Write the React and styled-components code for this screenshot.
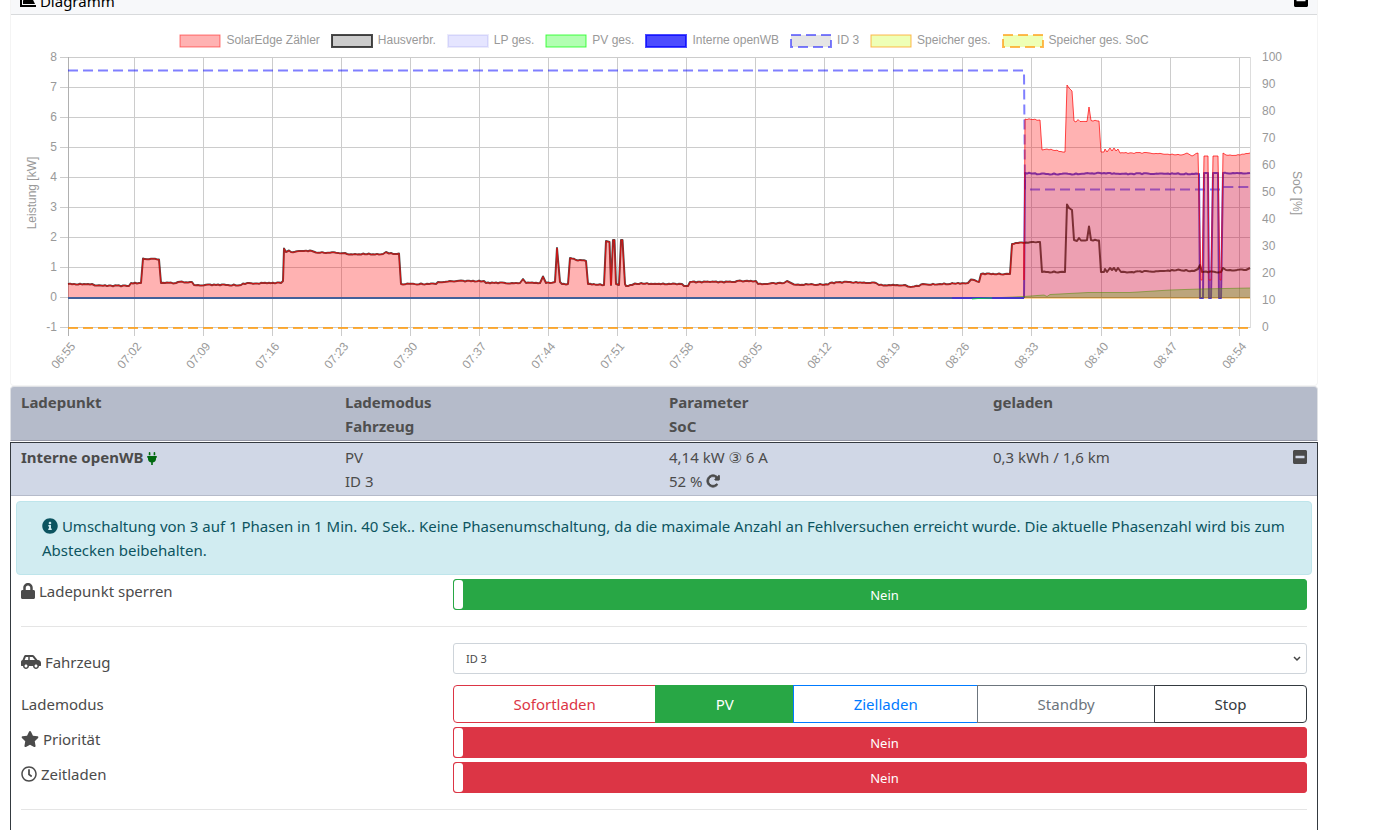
import React, { useState } from 'react'
import styled, { createGlobalStyle } from 'styled-components'
import {
  FaCarSide,
  FaChartArea,
  FaInfoCircle,
  FaLock,
  FaMinusSquare,
  FaPlug,
  FaRegClock,
  FaStar,
} from 'react-icons/fa'
import { FaRotateRight } from 'react-icons/fa6'

const legend = [
  { label: 'SolarEdge Zähler', fill: 'rgba(255,0,0,0.3)', stroke: 'rgba(255,0,0,0.5)', width: 1 },
  { label: 'Hausverbr.', fill: 'rgba(0,0,0,0.2)', stroke: 'rgba(0,0,0,0.7)', width: 2 },
  { label: 'LP ges.', fill: 'rgba(0,0,255,0.1)', stroke: 'rgba(0,0,200,0.08)', width: 2 },
  { label: 'PV ges.', fill: 'rgba(0,255,0,0.3)', stroke: 'rgba(0,255,0,0.7)', width: 1 },
  { label: 'Interne openWB', fill: 'rgba(0,0,255,0.7)', stroke: 'rgba(0,0,255,0.7)', width: 2 },
  { label: 'ID 3', fill: 'rgba(0,0,0,0.1)', stroke: 'rgba(0,0,255,0.5)', width: 2, dash: '10 5' },
  { label: 'Speicher ges.', fill: 'rgba(200,255,13,0.3)', stroke: 'rgba(255,155,13,0.7)', width: 1 },
  { label: 'Speicher ges. SoC', fill: 'rgba(200,255,13,0.3)', stroke: 'rgba(255,155,13,0.7)', width: 2, dash: '10 5' },
]

const times = [
  [68, '06:55'], [134, '07:02'], [203, '07:09'], [272, '07:16'], [341, '07:23'], [410, '07:30'],
  [479, '07:37'], [548, '07:44'], [617, '07:51'], [686, '07:58'], [755, '08:05'], [824, '08:12'],
  [893, '08:19'], [962, '08:26'], [1031, '08:33'], [1101, '08:40'], [1170, '08:47'], [1239, '08:54'],
]
const power = [8, 7, 6, 5, 4, 3, 2, 1, 0, -1]
const soc = [100, 90, 80, 70, 60, 50, 40, 30, 20, 10, 0]

const houseMorning = [
  [68, 284], [92, 284], [95, 285.5], [129, 286], [131, 283], [141, 283], [143, 258.5], [159, 259.5],
  [161, 283], [176, 283], [178, 282], [192, 282], [194, 285], [241, 285], [243, 283.5], [281, 283],
  [283, 281], [284, 248.5], [286, 252], [289, 250.5], [291, 252], [304, 251], [312, 251], [316, 252.5],
  [345, 253], [347, 254], [383, 254], [386, 252], [389, 253.5], [399, 253.5], [401, 284], [436, 284],
  [438, 282], [457, 281], [484, 281], [486, 283], [520, 283], [523, 279], [526, 283], [540, 283],
  [543, 276.5], [546, 283], [555, 282], [557, 248], [560, 282], [562, 284], [568, 284], [570, 258],
  [576, 260], [586, 261], [588, 284], [604, 285], [606, 241], [609.5, 242], [611, 285], [613, 240],
  [614.5, 240], [616, 284], [619, 285], [621, 240], [622.5, 240], [625, 284], [626, 286], [632, 285],
  [635, 283.5], [682, 284], [684, 286], [688, 286], [690, 282], [735, 282], [737, 281], [756, 281],
  [758, 284], [784, 283], [787, 281], [790, 282.5], [794, 284.5], [828, 284.5], [830, 283], [850, 282],
  [876, 283], [879, 285], [905, 285], [908, 286.5], [919, 286], [921, 284.5], [940, 284], [968, 283],
  [971, 279.5], [979, 282], [981, 274], [1010, 274], [1012, 244], [1018, 243], [1024, 243],
]
const houseCharging = [
  [1032, 242], [1040, 242], [1042, 272], [1065, 272], [1067, 204.5], [1069, 208], [1072, 210],
  [1074, 240], [1077, 241], [1079, 238], [1081, 240.5], [1087, 240], [1089, 226.5], [1091, 240],
  [1099, 240.5], [1101, 272], [1104, 272], [1105, 269], [1107, 272], [1110, 268], [1112, 270],
  [1114, 268], [1116, 271], [1118, 268], [1121, 272], [1132, 272], [1160, 271], [1180, 270], [1194, 271],
  [1198, 269], [1200, 265], [1202, 272], [1221, 272], [1223, 268], [1226, 270], [1246, 270], [1250, 268],
]
const meterCharging = [
  [1024, 280], [1025, 119], [1040, 120], [1042, 150], [1047, 149], [1065, 152], [1067, 85], [1069, 88],
  [1072, 91], [1074, 121], [1076, 122], [1078, 119.5], [1080, 121.5], [1087, 121.5], [1089, 107],
  [1091, 120.5], [1099, 121], [1101, 152], [1104, 152], [1105, 149], [1107, 152], [1110, 148],
  [1112, 151], [1114, 148], [1116, 151], [1118, 149], [1120, 153], [1150, 153], [1180, 155],
  [1187, 153], [1192, 156], [1198, 153], [1201, 280], [1202, 280], [1204, 156], [1208, 156],
  [1209, 280], [1211, 280], [1213, 156], [1218, 156], [1220, 280], [1221, 280], [1223, 153],
  [1226, 155], [1240, 155], [1250, 153],
]
const wallbox = [
  [68, 298], [1024, 298], [1025, 173], [1040, 174], [1070, 174], [1080, 174], [1100, 173], [1120, 174],
  [1160, 173.5], [1199, 174], [1200, 298], [1203, 298], [1204, 173], [1208, 173], [1209, 298],
  [1211, 298], [1213, 173], [1218, 173], [1219, 298], [1221, 298], [1223, 173], [1250, 173],
]
const solar = [
  [68, 298], [972, 298], [974, 298.5], [990, 298], [1024, 296.5], [1044, 295], [1047, 296.5],
  [1050, 294.5], [1088, 292.5], [1130, 292.5], [1170, 290], [1200, 289], [1250, 288],
]
const carSoc = [[68, 70.5], [1024, 70.5], [1025, 189.5], [1222, 189.5], [1223, 187], [1250, 187]]

// meter readings wobble a little on the flat stretches
const wobble = (points) => {
  const out = []
  points.forEach(([x, y], i) => {
    out.push([x, y])
    const next = points[i + 1]
    if (!next || next[0] - x < 6) return
    for (let px = x + 2; px < next[0] - 1; px += 2) {
      const base = y + ((next[1] - y) * (px - x)) / (next[0] - x)
      out.push([px, base + Math.sin(px * px) * 0.5])
    }
  })
  return out
}
const toPoints = (points) => points.map((p) => p.join(',')).join(' ')
const toArea = (points) => `68,298 ${toPoints(points)} 1250,298`

const house = wobble([...houseMorning, ...houseCharging])
const meter = wobble([...houseMorning, ...meterCharging])

const modes = [
  { label: 'Sofortladen', color: '#dc3545' },
  { label: 'PV', color: '#28a745' },
  { label: 'Zielladen', color: '#007bff' },
  { label: 'Standby', color: '#6c757d' },
  { label: 'Stop', color: '#343a40' },
]

const Chart = () => (
  <Plot viewBox='11 48 1306 337' role='img' aria-label='Leistung und SoC'>
    <g stroke='#ccc'>
      {power.map((v) => (
        <line key={v} x1='60' x2='1250' y1={297.5 - v * 30} y2={297.5 - v * 30} />
      ))}
      {times.map(([x]) => (
        <line key={x} x1={x + 0.5} x2={x + 0.5} y1='57' y2='336' />
      ))}
      <line x1='68.5' x2='68.5' y1='57' y2='336' stroke='#b0b0b0' />
      <line x1='1250.5' x2='1250.5' y1='57' y2='328' stroke='#ddd' />
    </g>
    <g fill='none' strokeLinejoin='round'>
      <polyline points='68,328 1250,328' stroke='rgba(255,155,13,0.8)' strokeWidth='2' strokeDasharray='10 5' />
      <polyline points='68,298 1250,298' stroke='rgba(255,155,13,0.4)' strokeWidth='2' />
      <polygon points={toArea(wallbox)} fill='rgba(0,0,255,0.1)' />
      <polyline points={toPoints(carSoc)} stroke='rgba(0,0,255,0.5)' strokeWidth='2' strokeDasharray='10 5' />
      <polyline points={toPoints(wobble(wallbox.slice(1)))} stroke='rgba(40,20,210,0.8)' strokeWidth='2' />
      <polygon points={toArea(solar)} fill='rgba(0,255,0,0.3)' />
      <polyline points={toPoints(solar)} stroke='rgba(0,200,0,0.5)' />
      <polyline points={toPoints(house)} stroke='rgba(0,0,0,0.7)' strokeWidth='2' />
      <polygon points={toArea(meter)} fill='rgba(255,0,0,0.3)' />
      <polyline points={toPoints(meter)} stroke='rgba(255,0,0,0.7)' />
      <polyline points='68,298 952,298' stroke='#44609a' strokeWidth='2' />
      <polyline points='952,298 1024,298' stroke='#4636c8' strokeWidth='2' />
      <polyline points='972,299 978,298.5 992,298' stroke='rgba(0,230,60,0.8)' />
    </g>
    <g fill='#999' fontSize='12'>
      {power.map((v) => (
        <text key={v} x='57' y={301 - v * 30} textAnchor='end'>{v}</text>
      ))}
      {soc.map((v) => (
        <text key={v} x='1262' y={331 - v * 2.7}>{v}</text>
      ))}
      {times.map(([x, label]) => (
        <text key={label} transform={`translate(${x + 5} 344) rotate(-50)`} y='4' textAnchor='end'>
          {label}
        </text>
      ))}
      <text transform='translate(36 193) rotate(-90)' textAnchor='middle'>Leistung [kW]</text>
      <text transform='translate(1293 193) rotate(90)' textAnchor='middle'>SoC [%]</text>
    </g>
  </Plot>
)

const Toggle = ({ id, color }) => {
  const [on, setOn] = useState(false)
  return (
    <Switch $color={color}>
      <input id={id} type='checkbox' role='switch' checked={on} onChange={() => setOn(!on)} />
      <i />
      <span>{on ? 'Ja' : 'Nein'}</span>
    </Switch>
  )
}

const App = () => {
  const [mode, setMode] = useState('PV')
  return (
    <>
      <GlobalStyle />
      <Page>
        <Diagram>
          <DiagramHead>
            <span><Icon as={FaChartArea} /> Diagramm</span>
            <Icon as={FaMinusSquare} $width={14} />
          </DiagramHead>
          <Legend>
            {legend.map((item) => (
              <li key={item.label}>
                <svg width='42' height='14'>
                  <rect
                    x='1' y='1' width='40' height='12'
                    fill={item.fill}
                    stroke={item.stroke}
                    strokeWidth={item.width}
                    strokeDasharray={item.dash}
                  />
                </svg>
                {item.label}
              </li>
            ))}
          </Legend>
          <Chart />
        </Diagram>

        <ListHead>
          <Cell>Ladepunkt</Cell>
          <Cell>Lademodus<br />Fahrzeug</Cell>
          <Cell>Parameter<br />SoC</Cell>
          <Cell>geladen</Cell>
        </ListHead>

        <ChargePoint>
          <Summary>
            <Cell><b>Interne openWB</b> <PlugIcon as={FaPlug} $width={10} /></Cell>
            <Cell>PV<br />ID 3</Cell>
            <Cell>
              4,14 kW ③ 6 A<br />
              52 %{' '}
              <IconButton aria-label='SoC aktualisieren'>
                <ReloadIcon as={FaRotateRight} $width={14} />
              </IconButton>
            </Cell>
            <Cell>
              <Spread>
                0,3 kWh / 1,6 km
                <IconButton aria-label='Zuklappen'><Icon as={FaMinusSquare} $width={14} /></IconButton>
              </Spread>
            </Cell>
          </Summary>

          <Alert>
            <Icon as={FaInfoCircle} /> Umschaltung von 3 auf 1 Phasen in 1 Min. 40 Sek.. Keine Phasenumschaltung,
            da die maximale Anzahl an Fehlversuchen erreicht wurde. Die aktuelle Phasenzahl wird bis zum Abstecken
            beibehalten.
          </Alert>

          <Settings>
            <Row>
              <Label htmlFor='lock'><Icon as={FaLock} $width={14} /> Ladepunkt sperren</Label>
              <Toggle id='lock' color='#28a745' />
            </Row>
            <Rule />
            <Row $gap={11}>
              <Label htmlFor='vehicle' $tall><Icon as={FaCarSide} $width={20} /> Fahrzeug</Label>
              <SelectBox>
                <select id='vehicle' defaultValue='ID 3'>
                  <option>ID 3</option>
                </select>
                <svg width='8' height='6' viewBox='0 0 8 6' fill='none' stroke='#444' strokeWidth='1.5'>
                  <path d='M1 1l3 3 3-3' />
                </svg>
              </SelectBox>
            </Row>
            <Row $gap={4}>
              <Label as='span' id='mode' $tall>Lademodus</Label>
              <Modes role='group' aria-labelledby='mode'>
                {modes.map((m) => (
                  <ModeButton
                    key={m.label}
                    $color={m.color}
                    $active={m.label === mode}
                    onClick={() => setMode(m.label)}
                  >
                    {m.label}
                  </ModeButton>
                ))}
              </Modes>
            </Row>
            <Row $gap={4}>
              <Label htmlFor='priority'><Icon as={FaStar} $width={18} /> Priorität</Label>
              <Toggle id='priority' color='#dc3545' />
            </Row>
            <Row>
              <Label htmlFor='timed'><Icon as={FaRegClock} /> Zeitladen</Label>
              <Toggle id='timed' color='#dc3545' />
            </Row>
            <Rule />
          </Settings>
        </ChargePoint>
      </Page>
    </>
  )
}

const GlobalStyle = createGlobalStyle`
  * {
    box-sizing: border-box;
  }
  body {
    margin: 0;
    background-color: #fff;
    color: #4b4b4b;
    font-family: 'Segoe UI', 'Noto Sans', 'DejaVu Sans', sans-serif;
    font-size: 15px;
    line-height: 24px;
  }
  html, body, #root {
    height: 100%;
  }
  button, select, input {
    font-family: inherit;
    color: inherit;
    margin: 0;
  }
`
const Icon = styled.svg`
  width: ${({ $width }) => $width || 16}px;
  height: 16px;
  vertical-align: -2px;
`
const PlugIcon = styled(Icon)`
  height: 13px;
  color: #00690f;
`
const ReloadIcon = styled(Icon)`
  stroke-width: 30px;
`
const Page = styled.main`
  display: flex;
  flex-direction: column;
  height: 100%;
  overflow: hidden;
  padding: 0 80px 0 10px;
`
const Diagram = styled.section`
  flex: none;
  border: 1px solid #f4f4f4;
  border-top: 0;
  border-radius: 0 0 4px 4px;
`
const DiagramHead = styled.header`
  display: flex;
  justify-content: space-between;
  align-items: flex-end;
  height: 15px;
  overflow: hidden;
  padding: 0 9px 1px;
  background-color: #f7f8fa;
  border-bottom: 1px solid #d8dadc;
  color: #000;
  > svg {
    margin-bottom: 5px;
  }
`
const Legend = styled.ul`
  display: flex;
  justify-content: center;
  gap: 11px;
  height: 33px;
  margin: 0;
  padding: 18px 0 0;
  list-style: none;
  font-family: 'Liberation Sans', Arial, sans-serif;
  font-size: 12px;
  line-height: 14px;
  color: #999;
  white-space: nowrap;
  li {
    display: flex;
    gap: 5px;
  }
  svg {
    margin-top: 1px;
  }
`
const Plot = styled.svg`
  display: block;
  width: 100%;
  font-family: 'Liberation Sans', Arial, sans-serif;
`
const Columns = styled.div`
  display: grid;
  grid-template-columns: repeat(4, 1fr);
`
const Cell = styled.div`
  padding: 0 5px;
`
const ListHead = styled(Columns)`
  flex: none;
  padding: 3px 5px 2px;
  background-color: #b5bbca;
  border: 1px solid #dfe1e5;
  border-bottom-color: #9699a8;
  border-radius: 4px 4px 0 0;
  font-weight: 700;
  color: #4f4f4f;
`
const ChargePoint = styled.section`
  flex: 1 0 auto;
  margin-top: 1px;
  border: 1px solid #343a40;
  border-bottom: 0;
`
const Summary = styled(Columns)`
  padding: 2px 5px;
  background-color: #d0d7e6;
  border-bottom: 1px solid #b5bbca;
`
const Spread = styled.div`
  display: flex;
  justify-content: space-between;
  align-items: center;
`
const IconButton = styled.button`
  padding: 0;
  border: 0;
  background: none;
  font-size: 16px;
  line-height: 16px;
  cursor: pointer;
`
const Alert = styled.div`
  margin: 5px 5px 4px;
  padding: 12px 25px;
  background-color: #d1ecf1;
  border: 1px solid #bee5eb;
  border-radius: 4px;
  color: #0c5460;
`
const Settings = styled.div`
  padding: 0 10px;
`
const Row = styled.div`
  display: grid;
  grid-template-columns: 1fr 2fr;
  column-gap: 5px;
  margin-bottom: ${({ $gap }) => $gap || 0}px;
`
const Label = styled.label`
  padding-top: ${({ $tall }) => ($tall ? 7 : 0)}px;
`
const Rule = styled.hr`
  margin: 16px 0;
  border: 0;
  border-top: 1px solid #e5e5e5;
`
const Switch = styled.span`
  position: relative;
  display: flex;
  height: 31px;
  background-color: ${({ $color }) => $color};
  border: 1px solid ${({ $color }) => $color};
  border-radius: 3px;
  color: #fff;
  font-size: 13px;
  line-height: 31px;
  i {
    width: 9px;
    background-color: #fff;
    border-radius: 3px;
  }
  span {
    flex: 1;
    text-align: center;
  }
  input {
    position: absolute;
    inset: 0;
    width: 100%;
    height: 100%;
    opacity: 0;
    cursor: pointer;
  }
`
const SelectBox = styled.div`
  position: relative;
  select {
    display: block;
    width: 100%;
    height: 31px;
    padding: 0 12px;
    appearance: none;
    background-color: #fff;
    border: 1px solid #ced4da;
    border-radius: 3px;
    font-size: 11px;
  }
  svg {
    position: absolute;
    top: 13px;
    right: 6px;
    pointer-events: none;
  }
`
const Modes = styled.div`
  display: flex;
`
const ModeButton = styled.button`
  flex: 1 1 auto;
  height: 38px;
  padding: 0 12px;
  font-size: 15px;
  line-height: 24px;
  color: ${({ $color, $active }) => ($active ? '#fff' : $color)};
  background-color: ${({ $color, $active }) => ($active ? $color : '#fff')};
  border: 1px solid ${({ $color }) => $color};
  cursor: pointer;
  &:not(:first-child) {
    margin-left: -1px;
  }
  &:first-child {
    border-radius: 4px 0 0 4px;
  }
  &:last-child {
    border-radius: 0 4px 4px 0;
  }
`

export default App
